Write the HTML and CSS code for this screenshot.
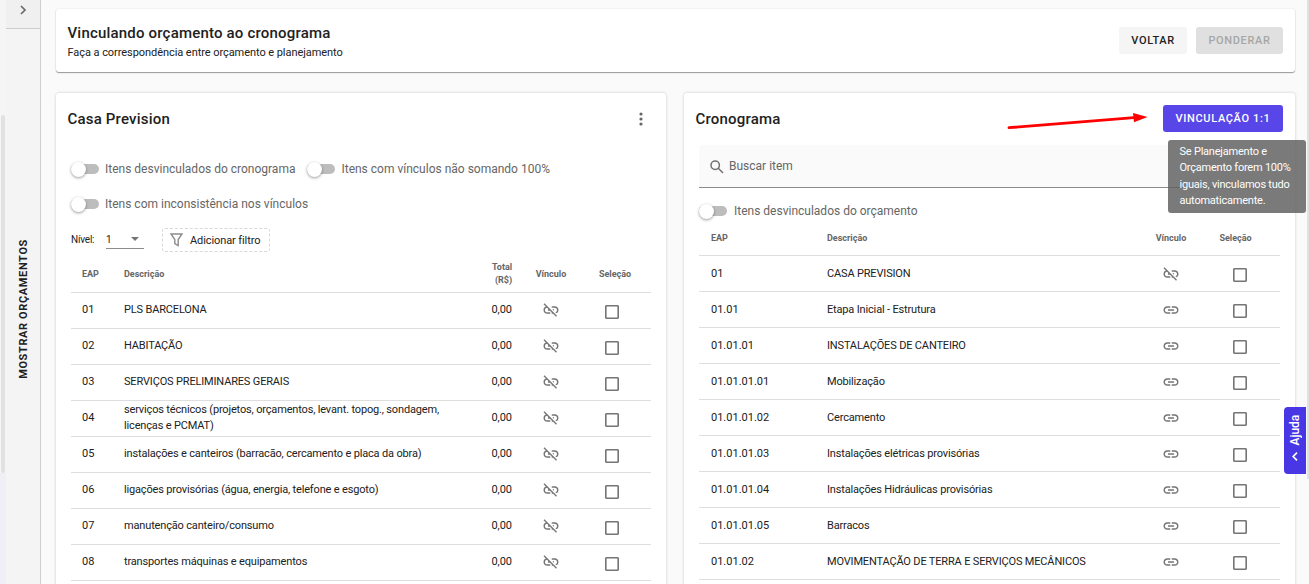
FILE: index.html
```html
<!DOCTYPE html>
<html lang="pt-BR">
<head>
<meta charset="utf-8">
<title>Vinculando orçamento ao cronograma</title>
<link rel="stylesheet" href="styles.css">
</head>
<body>
<svg class="defs" width="0" height="0">
  <symbol id="link" viewBox="0 0 24 24"><path d="M3.9 12c0-1.71 1.39-3.1 3.1-3.1h4V7H7c-2.76 0-5 2.24-5 5s2.24 5 5 5h4v-1.9H7c-1.71 0-3.1-1.39-3.1-3.1zM8 13h8v-2H8v2zm9-6h-4v1.9h4c1.71 0 3.1 1.39 3.1 3.1s-1.39 3.1-3.1 3.1h-4V17h4c2.76 0 5-2.24 5-5s-2.24-5-5-5z"/></symbol>
  <symbol id="unlink" viewBox="0 0 24 24"><path d="M17 7h-4v1.9h4c1.71 0 3.1 1.39 3.1 3.1 0 1.43-.98 2.63-2.31 2.98l1.46 1.46C20.88 15.61 22 13.95 22 12c0-2.76-2.24-5-5-5zm-1 4h-2.190l2 2H16zM2 4.270l3.110 3.110C3.290 8.120 2 9.910 2 12c0 2.760 2.240 5 5 5h4v-1.900H7c-1.710 0-3.100-1.390-3.100-3.100 0-1.590 1.210-2.900 2.760-3.070L8.730 11H8v2h2.730L13 15.270V17h1.730l4.010 4L20 19.740 3.270 3 2 4.270z"/></symbol>
</svg>
<div class="app">
  <div class="page-scroll"><div class="page-thumb"></div></div>
  <aside class="rail">
    <div class="rail-toggle"><svg width="8" height="10" viewBox="0 0 8 10"><path d="M2 1l4 4-4 4" fill="none" stroke="#666" stroke-width="1.6"/></svg></div>
    <div class="rail-label">MOSTRAR ORÇAMENTOS</div>
  </aside>
  <main class="main">
    <header class="topbar">
      <div class="headings">
        <h1 class="title">Vinculando orçamento ao cronograma</h1>
        <p class="subtitle">Faça a correspondência entre orçamento e planejamento</p>
      </div>
      <button class="btn btn-back">VOLTAR</button>
      <button class="btn btn-disabled">PONDERAR</button>
    </header>
    <div class="panels">
      <section class="panel budget">
        <div class="panel-head">
          <h2 class="title">Casa Prevision</h2>
          <svg class="more" width="4" height="14" viewBox="0 0 4 14"><circle cx="2" cy="2" r="1.6"/><circle cx="2" cy="7" r="1.6"/><circle cx="2" cy="12" r="1.6"/></svg>
        </div>
        <div class="switches">
          <label class="switch"><span class="track"></span><span>Itens desvinculados do cronograma</span></label>
          <label class="switch"><span class="track"></span><span>Itens com vínculos não somando 100%</span></label>
          <label class="switch"><span class="track"></span><span>Itens com inconsistência nos vínculos</span></label>
        </div>
        <div class="filters">
          <span class="level">Nível:</span>
          <div class="select"><span>1</span><svg width="8" height="4" viewBox="0 0 8 4"><path d="M0 0h8L4 4z" fill="#757575"/></svg></div>
          <div class="add-filter"><svg width="13" height="14" viewBox="0 0 13 14"><path d="M1 1h11L8.200 6.500v6L4.800 10.500v-4z" fill="none" stroke="#8c8c8c" stroke-width="1.400"/></svg><span>Adicionar filtro</span></div>
        </div>
        <div class="table">
          <div class="row head"><span class="eap">EAP</span><span>Descrição</span><span class="total">Total<br>(R$)</span><span class="mid">Vínculo</span><span class="mid sel">Seleção</span></div>
          <div class="row"><span class="eap">01</span><span class="desc">PLS BARCELONA</span><span class="total">0,00</span><svg class="chain"><use href="#unlink"/></svg><i class="box"></i></div>
          <div class="row"><span class="eap">02</span><span class="desc">HABITAÇÃO</span><span class="total">0,00</span><svg class="chain"><use href="#unlink"/></svg><i class="box"></i></div>
          <div class="row"><span class="eap">03</span><span class="desc">SERVIÇOS PRELIMINARES GERAIS</span><span class="total">0,00</span><svg class="chain"><use href="#unlink"/></svg><i class="box"></i></div>
          <div class="row"><span class="eap">04</span><span class="desc">serviços técnicos (projetos, orçamentos, levant. topog., sondagem,<br>licenças e PCMAT)</span><span class="total">0,00</span><svg class="chain"><use href="#unlink"/></svg><i class="box"></i></div>
          <div class="row"><span class="eap">05</span><span class="desc">instalações e canteiros (barracão, cercamento e placa da obra)</span><span class="total">0,00</span><svg class="chain"><use href="#unlink"/></svg><i class="box"></i></div>
          <div class="row"><span class="eap">06</span><span class="desc">ligações provisórias (água, energia, telefone e esgoto)</span><span class="total">0,00</span><svg class="chain"><use href="#unlink"/></svg><i class="box"></i></div>
          <div class="row"><span class="eap">07</span><span class="desc">manutenção canteiro/consumo</span><span class="total">0,00</span><svg class="chain"><use href="#unlink"/></svg><i class="box"></i></div>
          <div class="row"><span class="eap">08</span><span class="desc">transportes máquinas e equipamentos</span><span class="total">0,00</span><svg class="chain"><use href="#unlink"/></svg><i class="box"></i></div>
        </div>
      </section>
      <section class="panel schedule">
        <div class="panel-head">
          <h2 class="title">Cronograma</h2>
          <button class="btn btn-primary">VINCULAÇÃO 1:1</button>
        </div>
        <div class="search"><svg width="14" height="14" viewBox="0 0 14 14"><g fill="none" stroke="#707070" stroke-width="1.500"><circle cx="5.200" cy="5.200" r="4.200"/><path d="M8.300 8.300l4.700 4.700"/></g></svg><span>Buscar item</span></div>
        <label class="switch"><span class="track"></span><span>Itens desvinculados do orçamento</span></label>
        <div class="table">
          <div class="row head"><span class="eap">EAP</span><span>Descrição</span><span class="mid">Vínculo</span><span class="mid sel">Seleção</span></div>
          <div class="row"><span class="eap">01</span><span class="desc">CASA PREVISION</span><svg class="chain"><use href="#unlink"/></svg><i class="box"></i></div>
          <div class="row"><span class="eap">01.01</span><span class="desc">Etapa Inicial - Estrutura</span><svg class="chain"><use href="#link"/></svg><i class="box"></i></div>
          <div class="row"><span class="eap">01.01.01</span><span class="desc">INSTALAÇÕES DE CANTEIRO</span><svg class="chain"><use href="#link"/></svg><i class="box"></i></div>
          <div class="row"><span class="eap">01.01.01.01</span><span class="desc">Mobilização</span><svg class="chain"><use href="#link"/></svg><i class="box"></i></div>
          <div class="row"><span class="eap">01.01.01.02</span><span class="desc">Cercamento</span><svg class="chain"><use href="#link"/></svg><i class="box"></i></div>
          <div class="row"><span class="eap">01.01.01.03</span><span class="desc">Instalações elétricas provisórias</span><svg class="chain"><use href="#link"/></svg><i class="box"></i></div>
          <div class="row"><span class="eap">01.01.01.04</span><span class="desc">Instalações Hidráulicas provisórias</span><svg class="chain"><use href="#link"/></svg><i class="box"></i></div>
          <div class="row"><span class="eap">01.01.01.05</span><span class="desc">Barracos</span><svg class="chain"><use href="#link"/></svg><i class="box"></i></div>
          <div class="row"><span class="eap">01.01.02</span><span class="desc">MOVIMENTAÇÃO DE TERRA E SERVIÇOS MECÂNICOS</span><svg class="chain"><use href="#link"/></svg><i class="box"></i></div>
        </div>
      </section>
    </div>
  </main>
  <div class="main-thumb"></div>
  <svg class="arrow" width="144" height="22" viewBox="0 0 144 22"><path d="M3 16.700L128 6.700" stroke="#f00" stroke-width="2.800" stroke-linecap="round"/><path d="M127 2l14.500 4L128 11.200z" fill="#f00"/></svg>
  <div class="tooltip">Se Planejamento e<br>Orçamento forem 100%<br>iguais, vinculamos tudo<br>automaticamente.</div>
  <div class="help"><span>Ajuda</span><svg width="6" height="9" viewBox="0 0 6 9"><path d="M5 .7L1.200 4.500 5 8.300" fill="none" stroke="#fff" stroke-width="1.700"/></svg></div>
</div>
</body>
</html>
```
FILE: styles.css
```css
* { box-sizing: border-box; }
body { margin: 0; font-family: Roboto, "Liberation Sans", sans-serif; font-size: 11px; color: #212121; background: #fafafa; overflow: hidden; }
h1, h2, p { margin: 0; }
.defs { display: block; }
.app { position: relative; display: flex; height: 584px; overflow: hidden; }

.page-scroll { width: 6px; flex: none; background: linear-gradient(#f5f5f5 473px, #efeff5 473px); padding-top: 115px; }
.page-thumb { width: 4px; height: 358px; margin-left: 1px; background: #e1e1e1; border-radius: 2px; }
.rail { width: 35px; flex: none; background: #f4f4f4; border-right: 1px solid #cfcfcf; display: flex; flex-direction: column; align-items: center; }
.rail-toggle { align-self: stretch; height: 29px; flex: none; background: #f0f0f0; border-bottom: 1px solid #ccc; display: flex; justify-content: center; padding-top: 5px; }
.rail-label { margin: 210px 0 0 2px; writing-mode: vertical-rl; transform: rotate(180deg); font-size: 11px; line-height: 16px; font-weight: 700; letter-spacing: .62px; white-space: nowrap; }

.main { flex: 1; padding: 9px 14px 0 15px; min-width: 0; }
.topbar { height: 63px; background: #fff; border-radius: 3px; box-shadow: 0 1px 1px #999, 0 0 2px #ddd; display: flex; align-items: center; padding: 0 12px; gap: 9px; }
.headings { flex: 1; padding-top: 2px; }
.title { font-size: 15px; line-height: 20px; font-weight: 500; letter-spacing: .19px; margin-left: -.5px; }
.subtitle { font-size: 11px; line-height: 16px; margin: 2px 0 0 -.5px; letter-spacing: -.06px; }
.btn { height: 27px; border: 0; border-radius: 3px; padding: 0; font: 500 11px/27px Roboto, sans-serif; letter-spacing: .65px; text-align: center; white-space: nowrap; }
.btn-back { width: 68px; background: #f5f5f5; color: #212121; }
.btn-disabled { width: 87px; background: #e0e0e0; color: #a6a6a6; }
.btn-primary { width: 120px; margin-top: -2px; background: #5846e8; color: #fff; }

.panels { display: grid; grid-template-columns: 610px 611px; gap: 18px; margin-top: 21px; }
.panel { height: 520px; background: #fff; border-radius: 3px; box-shadow: 0 0 3px rgba(0,0,0,.2); padding: 0 15px; }
.panel-head { height: 52px; display: flex; align-items: center; justify-content: space-between; margin: 0 -3px; }
.more { margin-right: 11px; fill: #666; }

.switches { display: flex; flex-wrap: wrap; gap: 11px 12px; padding-top: 12px; }
.switch { display: flex; align-items: center; height: 24px; gap: 6px; font-size: 12px; color: #666; white-space: nowrap; }
.track { width: 28px; height: 10px; border-radius: 5px; background: #bdbdbd; display: flex; align-items: center; }
.track::before { content: ""; width: 15px; height: 15px; border-radius: 50%; background: #fff; box-shadow: 0 1px 3px rgba(0,0,0,.4); }
.filters { display: flex; align-items: center; height: 24px; margin-top: 12px; }
.level { width: 35px; font-size: 10px; letter-spacing: -.2px; margin-top: -2px; }
.select { width: 38px; height: 17px; border-bottom: 1px solid #8c8c8c; display: flex; align-items: center; justify-content: space-between; padding: 0 5px 1px 0; font-size: 10px; }
.add-filter { width: 108px; height: 24px; margin-left: 18px; border: 1px dashed #d8d8d8; border-radius: 3px; display: flex; align-items: center; gap: 7px; padding-left: 7px; letter-spacing: -.1px; white-space: nowrap; }

.row { display: grid; align-items: center; height: 36px; line-height: 16px; border-bottom: 1px solid #dedede; padding-bottom: 2px; white-space: nowrap; }
.row .eap { padding-left: 11px; }
.desc { letter-spacing: -.16px; }
.total { text-align: right; letter-spacing: -.05px; }
.chain { width: 18px; height: 18px; fill: #757575; justify-self: center; margin-top: 1px; }
.box { width: 14px; height: 14px; border: 1px solid #757575; box-shadow: inset 0 0 0 .6px #757575; border-radius: 1px; justify-self: center; margin-top: 5px; }
.head { font-size: 9px; font-weight: 700; color: #666; line-height: 13px; letter-spacing: 0; }
.mid { text-align: center; }
.budget .row { grid-template-columns: 53px 328px 60px 78px 60px; }
.budget .head { height: 41px; padding-bottom: 0; padding-top: 4px; }
.budget .head .sel { margin: 0 9px 0 -3px; padding-left: 2px; }
.budget .box { margin-left: -16px; }

.search { height: 43px; background: #fafafa; border-bottom: 1px solid #8c8c8c; border-radius: 3px 3px 0 0; display: flex; align-items: center; gap: 5px; padding-left: 11px; font-size: 12px; color: #666; }
.search svg { margin-top: 2px; }
.schedule .switch { margin-top: 11px; gap: 7px; }
.schedule .row { grid-template-columns: 128px 310px 68px 75px; padding-bottom: 0; }
.schedule .row .eap { padding-left: 12px; }
.schedule .head { height: 33px; padding-bottom: 1px; }
.schedule .head .sel { margin-right: 14px; }
.schedule .box { margin-left: -5px; margin-top: 3px; }

.main-thumb { position: absolute; right: 0; top: 0; width: 2px; height: 479px; background: #e1e1e1; }
.arrow { position: absolute; left: 1006px; top: 111px; }
.tooltip { position: absolute; left: 1168px; top: 140px; width: 138px; height: 73px; padding: 4px 0 0 11.500px; border-radius: 3px; background: rgba(97,97,97,.84); color: #fff; line-height: 16.300px; letter-spacing: -.22px; white-space: nowrap; }
.help { position: absolute; left: 1284px; top: 407px; width: 22px; height: 67px; border-radius: 4px 0 0 4px; background: #4936e4; color: #fff; display: flex; flex-direction: column; align-items: center; padding-top: 8px; gap: 7px; font-size: 12px; font-weight: 500; letter-spacing: -.1px; }
.help span { writing-mode: vertical-rl; transform: rotate(180deg); line-height: 16px; }
```
